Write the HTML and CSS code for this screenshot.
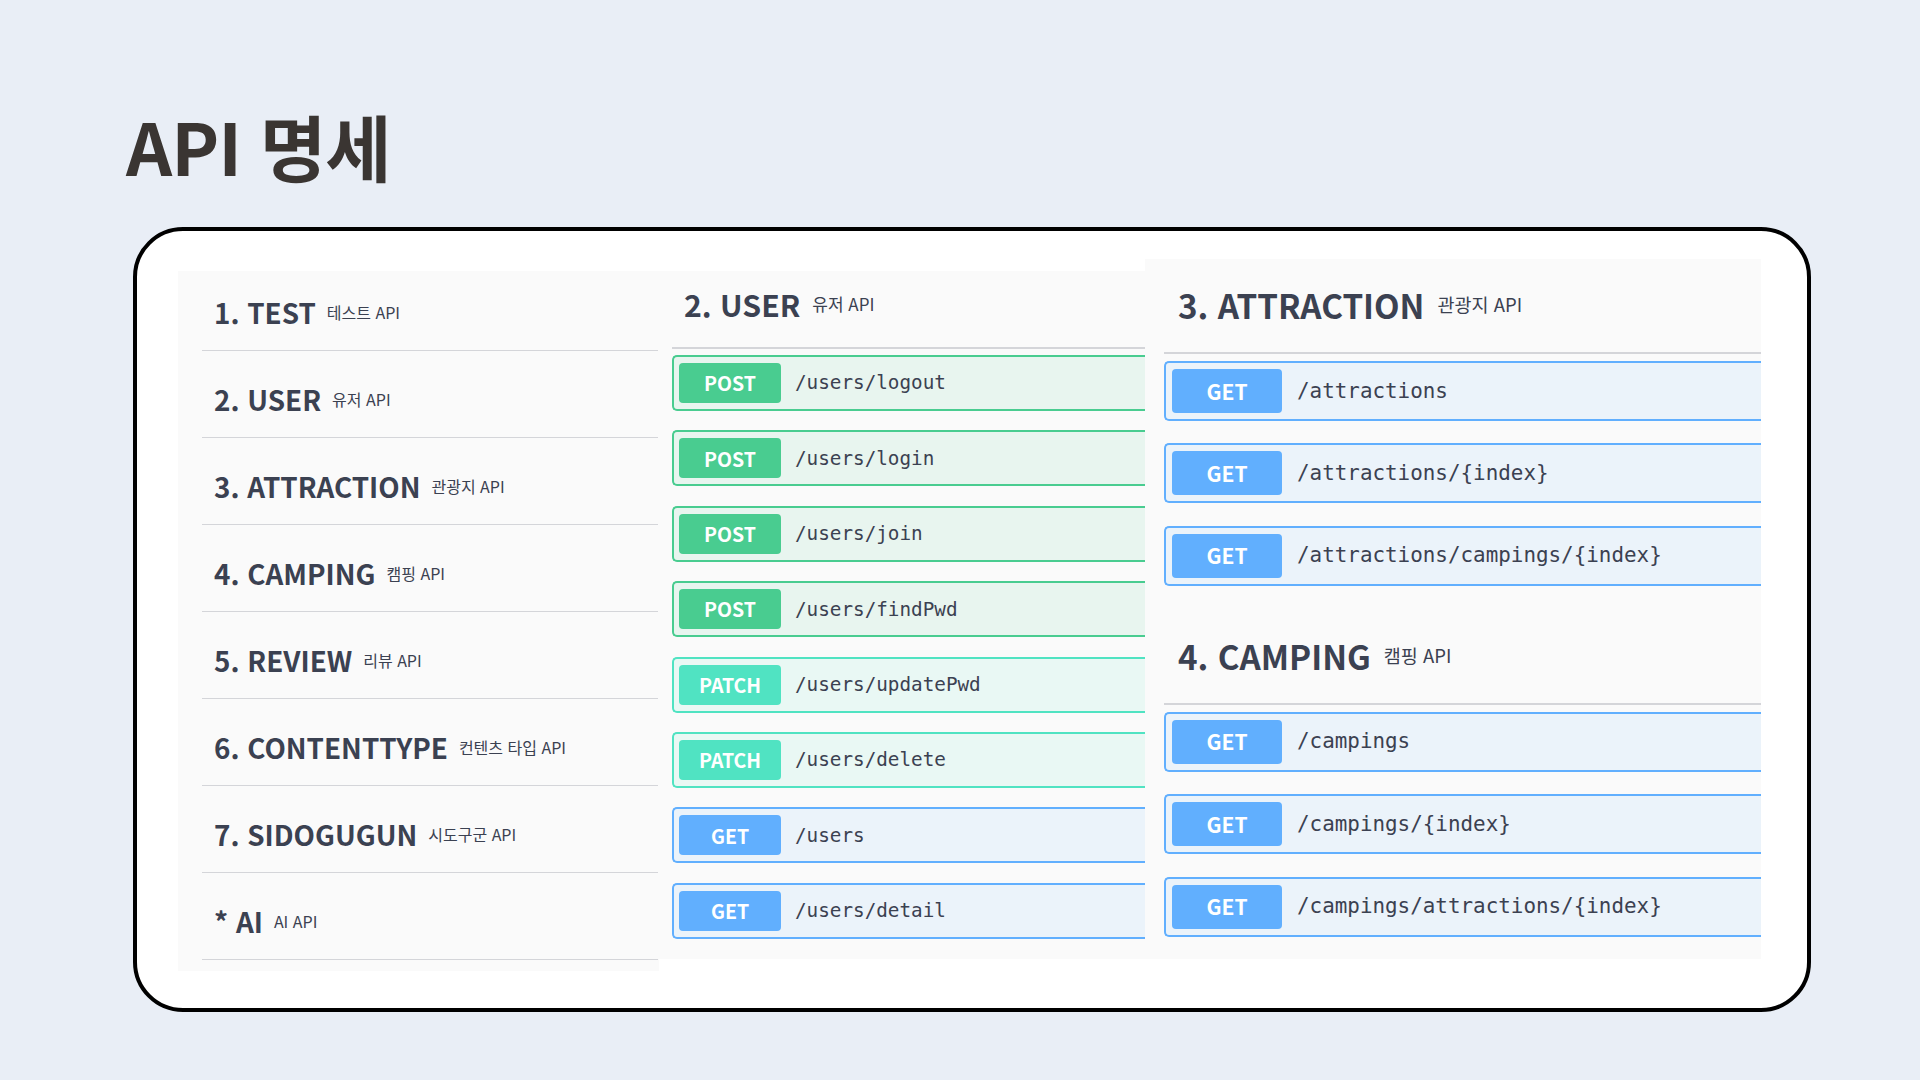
FILE: index.html
```html
<!DOCTYPE html>
<html lang="ko">
<head>
<meta charset="utf-8">
<title>API 명세</title>
<link rel="stylesheet" href="styles.css">
</head>
<body>
<div class="slide">
  <h1 class="title">API 명세</h1>
  <div class="card">
    <div class="panel nav">
      <ul class="nav-list">
        <li class="nav-item"><span class="tag">1. TEST</span><small class="sub">테스트 API</small></li>
        <li class="nav-item"><span class="tag">2. USER</span><small class="sub">유저 API</small></li>
        <li class="nav-item"><span class="tag">3. ATTRACTION</span><small class="sub">관광지 API</small></li>
        <li class="nav-item"><span class="tag">4. CAMPING</span><small class="sub">캠핑 API</small></li>
        <li class="nav-item"><span class="tag">5. REVIEW</span><small class="sub">리뷰 API</small></li>
        <li class="nav-item"><span class="tag">6. CONTENTTYPE</span><small class="sub">컨텐츠 타입 API</small></li>
        <li class="nav-item"><span class="tag">7. SIDOGUGUN</span><small class="sub">시도구군 API</small></li>
        <li class="nav-item"><span class="tag">* AI</span><small class="sub">AI API</small></li>
      </ul>
    </div>
    <div class="panel mid">
      <div class="head"><span class="tag">2. USER</span><small class="sub">유저 API</small></div>
      <div class="ops">
        <div class="op post"><span class="method">POST</span><span class="path">/users/logout</span></div>
        <div class="op post"><span class="method">POST</span><span class="path">/users/login</span></div>
        <div class="op post"><span class="method">POST</span><span class="path">/users/join</span></div>
        <div class="op post"><span class="method">POST</span><span class="path">/users/findPwd</span></div>
        <div class="op patch"><span class="method">PATCH</span><span class="path">/users/updatePwd</span></div>
        <div class="op patch"><span class="method">PATCH</span><span class="path">/users/delete</span></div>
        <div class="op get"><span class="method">GET</span><span class="path">/users</span></div>
        <div class="op get"><span class="method">GET</span><span class="path">/users/detail</span></div>
      </div>
    </div>
    <div class="panel right">
      <section class="group">
        <div class="head"><span class="tag">3. ATTRACTION</span><small class="sub">관광지 API</small></div>
        <div class="ops">
          <div class="op get"><span class="method">GET</span><span class="path">/attractions</span></div>
          <div class="op get"><span class="method">GET</span><span class="path">/attractions/{index}</span></div>
          <div class="op get"><span class="method">GET</span><span class="path">/attractions/campings/{index}</span></div>
        </div>
      </section>
      <section class="group">
        <div class="head"><span class="tag">4. CAMPING</span><small class="sub">캠핑 API</small></div>
        <div class="ops">
          <div class="op get"><span class="method">GET</span><span class="path">/campings</span></div>
          <div class="op get"><span class="method">GET</span><span class="path">/campings/{index}</span></div>
          <div class="op get"><span class="method">GET</span><span class="path">/campings/attractions/{index}</span></div>
        </div>
      </section>
    </div>
  </div>
</div>
</body>
</html>
```
FILE: styles.css
```css
* { box-sizing: border-box; }
html, body { margin: 0; padding: 0; }
body {
  background: #e9eef6;
  font-family: "Noto Sans CJK KR", "Noto Sans", sans-serif;
  color: #3b4151;
}
.slide {
  width: 1920px;
  height: 1080px;
  overflow: hidden;
  padding: 109px 0 0 0;
}
.title {
  margin: 0 0 0 126px;
  font-size: 72px;
  line-height: 1;
  font-weight: 700;
  color: #3a3532;
  letter-spacing: -1px;
  height: 118px;
}
.card {
  margin-left: 133px;
  width: 1678px;
  height: 785px;
  border: 4px solid #000;
  border-radius: 50px;
  background: #fff;
  display: flex;
  align-items: flex-start;
  padding: 28px 0 0 41px;
}
.panel {
  background: #fafafa;
  overflow: hidden;
}
.tag {
  font-weight: 700;
  line-height: 1;
  color: #3b4151;
}
.sub {
  font-weight: 400;
  line-height: 1;
  color: #3b4151;
}

/* left navigation */
.nav {
  width: 481px;
  height: 700px;
  margin-top: 12px;
  padding: 0 1px 0 24px;
}
.nav-list {
  list-style: none;
  margin: -7px 0 0 0;
  padding: 0;
}
.nav-item {
  height: 87px;
  border-bottom: 1px solid #d4d5d9;
  padding: 12px 0 0 12px;
  display: flex;
  align-items: center;
}
.nav-item .tag { font-size: 27.8px; }
.nav-item .sub { font-size: 16px; margin-left: 11px; margin-bottom: 3px; }

/* middle column */
.mid {
  width: 486px;
  height: 688px;
  margin-top: 12px;
  padding-left: 13px;
}
.mid .head {
  height: 78px;
  border-bottom: 2px solid #d4d5d9;
  padding: 0 0 9px 12px;
  display: flex;
  align-items: center;
}
.mid .tag { font-size: 30.2px; }
.mid .sub { font-size: 17px; margin-left: 12px; margin-bottom: 3px; }
.ops {
  display: flex;
  flex-direction: column;
}
.mid .ops { margin-top: 6px; gap: 19.4px; }
.op {
  display: flex;
  align-items: center;
  border: 2px solid;
  border-right: none;
  border-radius: 5px 0 0 5px;
}
.mid .op { height: 56px; padding-left: 5px; }
.method {
  display: flex;
  align-items: center;
  justify-content: center;
  color: #fff;
  font-weight: 700;
  border-radius: 4px;
  line-height: 1;
}
.mid .method { width: 102px; height: 40px; font-size: 19.5px; }
.path {
  font-family: "DejaVu Sans Mono", "Liberation Mono", monospace;
  color: #3b4151;
  line-height: 1;
}
.mid .path { font-size: 19.3px; margin-left: 14px; }

.post { background: #e8f5ef; border-color: #49cc90; }
.post .method { background: #49cc90; }
.patch { background: #e9f8f4; border-color: #50e3c2; }
.patch .method { background: #50e3c2; }
.get { background: #ebf3fa; border-color: #61affe; }
.get .method { background: #61affe; }

/* right column */
.right {
  width: 616px;
  height: 700px;
  padding-left: 19px;
}
.right .group + .group { margin-top: 24px; }
.right .head {
  height: 95px;
  border-bottom: 2px solid #d4d5d9;
  padding: 0 0 1px 14px;
  display: flex;
  align-items: center;
}
.right .tag { font-size: 33.2px; }
.right .sub { font-size: 18.5px; margin-left: 13px; margin-bottom: 2px; }
.right .ops { margin-top: 7px; gap: 22.4px; }
.right .op { height: 60px; padding-left: 6px; }
.right .method { width: 110px; height: 44px; font-size: 21px; }
.right .path { font-size: 20.9px; margin-left: 15px; }
```
